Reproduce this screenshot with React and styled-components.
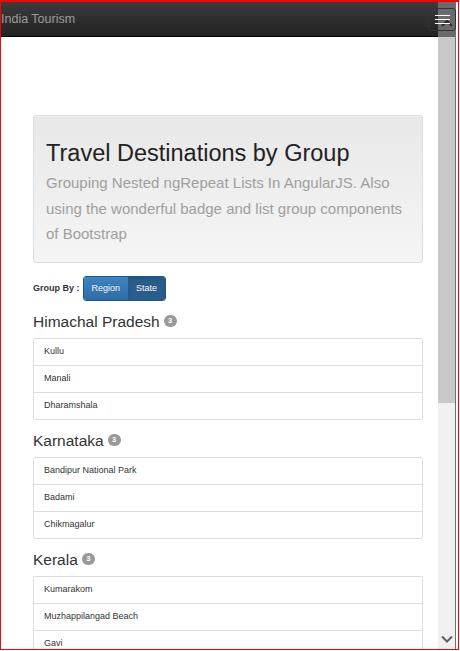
import React from 'react';
import styled, { createGlobalStyle } from 'styled-components';

const GlobalStyle = createGlobalStyle`
  html, body {
    margin: 0;
    padding: 0;
    background: #fff;
    overflow: hidden;
  }
  * {
    box-sizing: border-box;
  }
  body {
    font-family: "Liberation Sans", Arial, sans-serif;
    color: #333;
  }
`;

const groups = [
  { name: 'Himachal Pradesh', places: ['Kullu', 'Manali', 'Dharamshala'] },
  { name: 'Karnataka', places: ['Bandipur National Park', 'Badami', 'Chikmagalur'] },
  { name: 'Kerala', places: ['Kumarakom', 'Muzhappilangad Beach', 'Gavi'] },
];

const App = () => {
  return (
    <>
      <GlobalStyle />
      <Frame>
        <Main>
          <Navbar>
            <Brand>India Tourism</Brand>
          </Navbar>
          <Content>
            <Jumbotron>
              <Title>Travel Destinations by Group</Title>
              <Lead>
                Grouping Nested ngRepeat Lists In AngularJS. Also using the
                wonderful badge and list group components of Bootstrap
              </Lead>
            </Jumbotron>

            <GroupBy>
              <GroupLabel>Group By :</GroupLabel>
              <ButtonGroup>
                <GroupButton>Region</GroupButton>
                <GroupButton active>State</GroupButton>
              </ButtonGroup>
            </GroupBy>

            {groups.map((group) => (
              <section key={group.name}>
                <GroupHeading>
                  {group.name}
                  <Badge>{group.places.length}</Badge>
                </GroupHeading>
                <ListGroup>
                  {group.places.map((place) => (
                    <ListItem key={place}>{place}</ListItem>
                  ))}
                </ListGroup>
              </section>
            ))}
          </Content>
        </Main>

        <Scrollbar>
          <ScrollCap>
            <svg width="12" height="8" viewBox="0 0 12 8">
              <path d="M1 7 L6 2 L11 7" fill="none" stroke="#2a2a2a" strokeWidth="2" />
            </svg>
          </ScrollCap>
          <Thumb />
          <Track>
            <svg width="12" height="8" viewBox="0 0 12 8">
              <path d="M1 1.5 L6 6.5 L11 1.5" fill="none" stroke="#606060" strokeWidth="2" />
            </svg>
          </Track>
        </Scrollbar>
        <Edge />

        <Toggle>
          <IconBar />
          <IconBar />
          <IconBar />
        </Toggle>
      </Frame>
    </>
  );
};

export default App;

const Frame = styled.div`
  position: relative;
  display: flex;
  width: 459px;
  height: 650px;
  border: 1px solid #f00;
  border-top-width: 2px;
  overflow: hidden;
`;

const Main = styled.div`
  flex: 1;
  display: flex;
  flex-direction: column;
  overflow: hidden;
`;

const Navbar = styled.div`
  flex: none;
  height: 35px;
  display: flex;
  align-items: center;
  background: linear-gradient(to bottom, #3c3c3c 0%, #222 100%);
  border-bottom: 1px solid #080808;
`;

const Brand = styled.span`
  font-size: 12.5px;
  line-height: 34px;
  color: #9d9d9d;
`;

const Content = styled.div`
  padding: 0 15px 0 32px;
`;

const Jumbotron = styled.div`
  margin-top: 78px;
  padding: 24px 12px 15px;
  border: 1px solid #dcdcdc;
  border-radius: 3px;
  background: linear-gradient(to bottom, #e8e8e8 0%, #f5f5f5 100%);
  box-shadow: inset 0 1px 0 rgba(255, 255, 255, 0.25);
`;

const Title = styled.h1`
  margin: 0 0 4px;
  font-size: 23.5px;
  font-weight: normal;
  line-height: 26.4px;
  color: #222;
`;

const Lead = styled.p`
  margin: 0;
  font-size: 15px;
  line-height: 25.5px;
  color: #9f9f9f;
`;

const GroupBy = styled.div`
  display: flex;
  align-items: center;
  gap: 3px;
  margin-top: 13px;
`;

const GroupLabel = styled.span`
  font-size: 9px;
  font-weight: bold;
  color: #333;
`;

const ButtonGroup = styled.div`
  display: flex;
  border: 1px solid #245580;
  border-radius: 3px;
  overflow: hidden;
`;

const GroupButton = styled.span`
  height: 23px;
  padding: 0 8px;
  display: flex;
  align-items: center;
  font-size: 9px;
  color: #fff;
  text-shadow: 0 -1px 0 rgba(0, 0, 0, 0.2);
  background: ${({ active }) =>
    active ? '#285d8c' : 'linear-gradient(to bottom, #3d84c4 0%, #2e6da5 100%)'};
  box-shadow: ${({ active }) => (active ? 'inset 0 2px 4px rgba(0, 0, 0, 0.08)' : 'none')};
`;

const GroupHeading = styled.h3`
  display: flex;
  align-items: center;
  gap: 4px;
  margin: 12px 0 8px;
  font-size: 15.5px;
  font-weight: normal;
  line-height: 17px;
  color: #333;
`;

const Badge = styled.span`
  min-width: 13px;
  height: 12px;
  padding: 0 3px;
  border-radius: 6px;
  background: #999;
  color: #fff;
  font-size: 7.5px;
  font-weight: bold;
  line-height: 12px;
  text-align: center;
`;

const ListGroup = styled.div`
  display: flex;
  flex-direction: column;
`;

const ListItem = styled.div`
  padding: 7px 10px 9px;
  margin-bottom: -1px;
  border: 1px solid #ddd;
  background: #fff;
  font-size: 9px;
  line-height: 10px;
  color: #333;

  &:first-child {
    border-top-left-radius: 2px;
    border-top-right-radius: 2px;
  }
  &:last-child {
    margin-bottom: 0;
    border-bottom-left-radius: 2px;
    border-bottom-right-radius: 2px;
  }
`;

const Scrollbar = styled.div`
  flex: none;
  width: 17px;
  display: flex;
  flex-direction: column;
`;

const ScrollCap = styled.div`
  flex: none;
  height: 35px;
  background: #6a6a6a;
  display: flex;
  justify-content: center;
  padding-top: 17px;
`;

const Thumb = styled.div`
  flex: none;
  height: 366px;
  background: #c8c8c8;
`;

const Track = styled.div`
  flex: 1;
  background: #f0f0f0;
  display: flex;
  align-items: flex-end;
  justify-content: center;
  padding-bottom: 6px;
`;

const Edge = styled.div`
  flex: none;
  width: 3px;
  border-left: 1px solid #707070;
  background: #fff;
`;

const Toggle = styled.div`
  position: absolute;
  top: 6px;
  right: 2px;
  width: 28px;
  height: 23px;
  padding: 6px 6px 0;
  border: 1px solid #333;
  border-radius: 3px;
  display: flex;
  flex-direction: column;
  gap: 3px;
`;

const IconBar = styled.span`
  display: block;
  width: 15px;
  height: 1px;
  background: #fff;
`;
